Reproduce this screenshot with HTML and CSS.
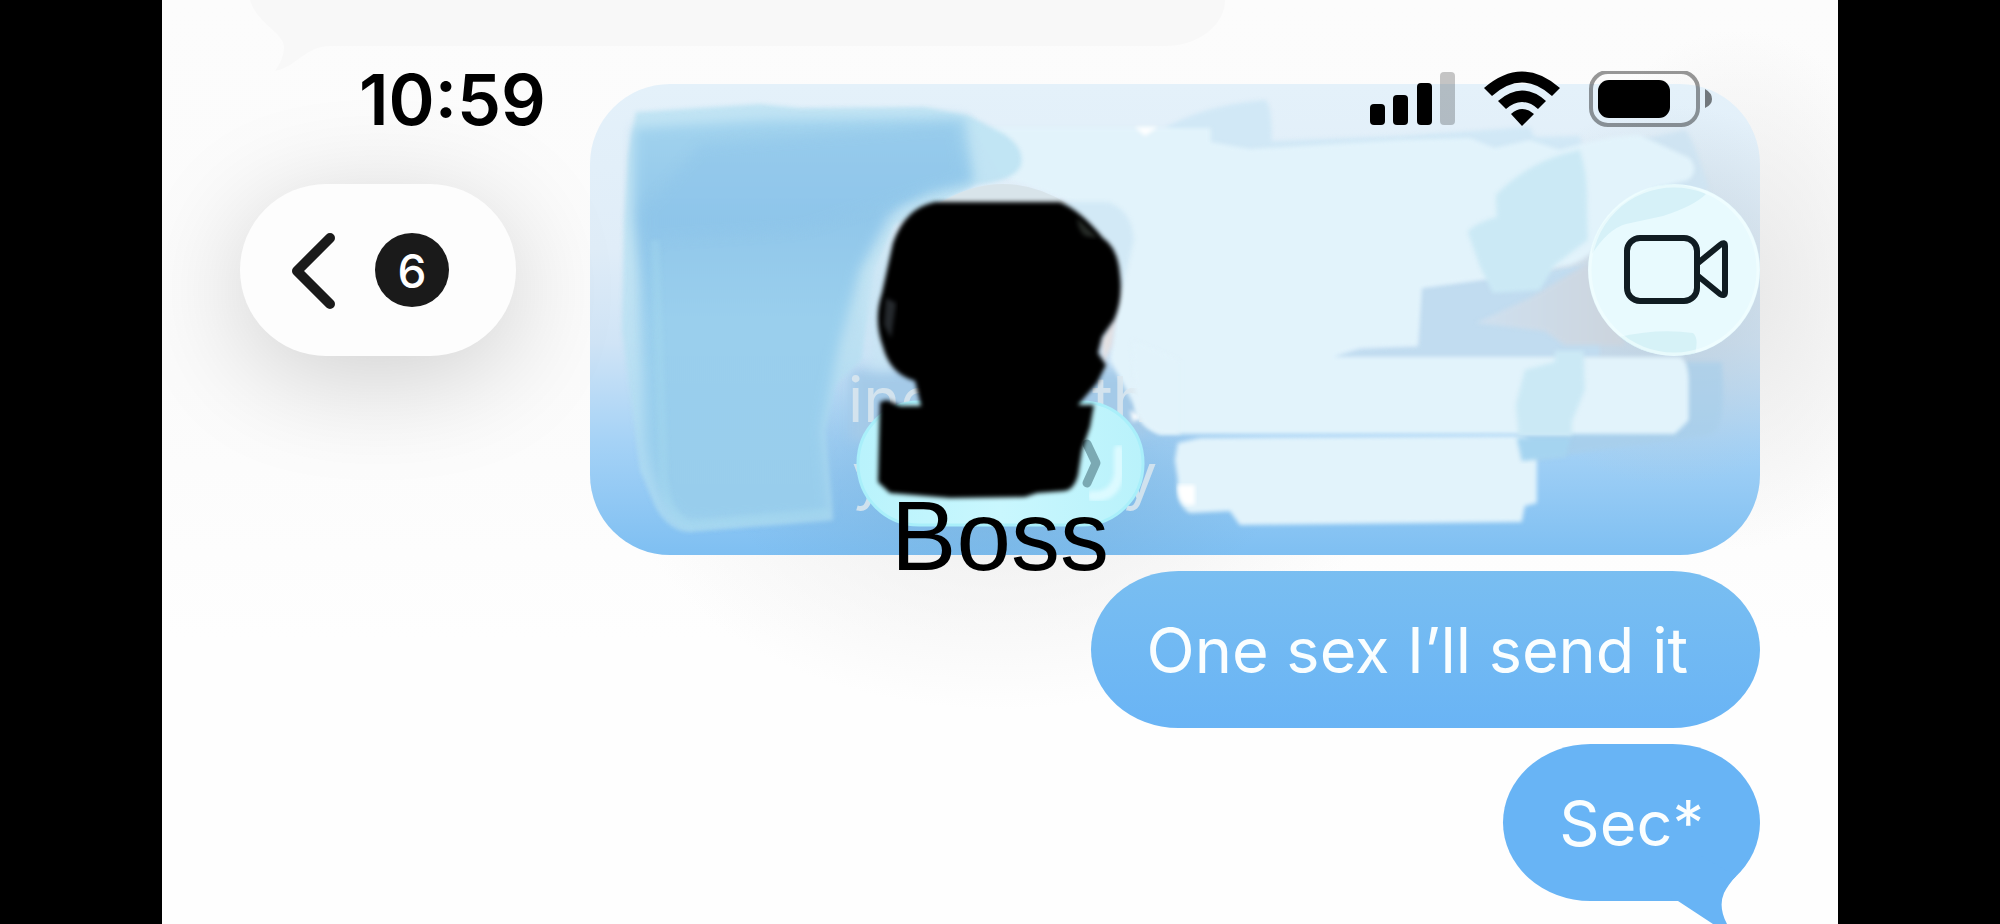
FILE: index.html
```html
<!DOCTYPE html>
<html lang="en">
<head>
<meta charset="utf-8">
<meta name="viewport" content="width=device-width, initial-scale=1">
<title>Messages</title>
<link rel="stylesheet" href="styles.css">
</head>
<body>
<div class="screen">
  <main class="thread">
    <div class="incoming">
      <svg class="incoming-tail" viewBox="0 0 80 80" aria-hidden="true"><path d="M0 0 C6 22 32 32 34 46 C34 56 30 64 25 71 C46 67 56 46 80 46 V0Z"/></svg>
    </div>
    <div class="bubble bubble-long">
      <svg class="paint" viewBox="590 84 1170 471" preserveAspectRatio="none" aria-hidden="true">
        <defs>
          <linearGradient id="leftPaint" x1="0" y1="0" x2="0" y2="1">
            <stop offset="0" stop-color="#a2d3ee"/><stop offset=".25" stop-color="#91c7ea"/><stop offset=".5" stop-color="#9acfed"/><stop offset="1" stop-color="#98cdec"/>
          </linearGradient>
          <linearGradient id="greyPatch" x1="0" y1="0" x2="1" y2="0"><stop offset="0" stop-color="#cfe0ef"/><stop offset="1" stop-color="#ccd4dd"/></linearGradient>
          <radialGradient id="rightShade"><stop offset="0" stop-color="#b9c8d3" stop-opacity=".75"/><stop offset="1" stop-color="#b9c8d3" stop-opacity="0"/></radialGradient>
          <radialGradient id="midShade"><stop offset="0" stop-color="#6fa9d4" stop-opacity=".6"/><stop offset="1" stop-color="#6fa9d4" stop-opacity="0"/></radialGradient>
          <filter id="soft" color-interpolation-filters="sRGB"><feGaussianBlur stdDeviation="2"/></filter>
          <filter id="wide" x="-20%" y="-20%" width="140%" height="140%" color-interpolation-filters="sRGB"><feGaussianBlur stdDeviation="6"/></filter>
        </defs>
        <ellipse cx="1670" cy="295" rx="190" ry="190" fill="url(#rightShade)"/>
        <ellipse cx="1000" cy="480" rx="280" ry="140" fill="url(#midShade)"/>
        <path d="M850 370H1150V434H1200L850 440Z" fill="#a4cae8" filter="url(#wide)"/>
        <path d="M1165 128Q1205 105 1265 100Q1272 102 1272 141L1400 136L1530 127L1535 137L1580 136L1585 155L1560 170L1250 165Z" fill="#d1e8f6" filter="url(#soft)"/>
        <path d="M1640 140L1685 130Q1692 134 1710 190L1650 195Z" fill="#cfe4f2" filter="url(#soft)"/>
        <path d="M1330 358Q1350 346 1418 346V286L1600 264V358Z" fill="#c1dcf0" filter="url(#soft)"/>
        <path d="M1476 323L1530 298L1590 262L1625 345L1565 345L1545 331Z" fill="url(#greyPatch)" filter="url(#soft)"/>
        <path d="M1685 362L1722 362Q1728 430 1710 435L1600 450L1530 461L1518 435L1685 430Z" fill="#a9cfea" opacity=".7" filter="url(#soft)"/>
        <path d="M965 115L985 128H1211V142L1250 149L1400 140L1470 138L1495 148L1530 140L1560 150Q1610 135 1640 135L1690 158Q1700 172 1688 180Q1670 185 1655 188L1612 220Q1600 255 1570 265L1480 280L1422 288L1418 346L1360 348L1333 357H1680Q1688 360 1689 380V420L1675 434H1160Q1137 425 1134 405L1110 360L1121 280L1119 260L1095 210L1000 175Z" fill="#e2f3fb" filter="url(#soft)"/>
        <path d="M1060 202H1108Q1132 210 1134 240L1122 290Z" fill="#d2e9f6" filter="url(#soft)"/>
        <path d="M1178 443L1200 438L1520 436Q1535 440 1537 460V503L1525 506L1522 522L1240 525L1230 511L1190 513Q1175 505 1178 480L1175 460Z" fill="#e2f3fb" filter="url(#soft)"/>
        <path d="M1580 150Q1588 175 1587 200L1588 240L1555 265L1540 290L1493 293L1480 266L1468 232Q1475 223 1497 217L1496 195Q1530 160 1580 150Z" fill="#cbe9f5" filter="url(#soft)"/>
        <path d="M1555 351H1584L1585 390L1572 422V436H1519L1516 405L1525 370L1555 362Z" fill="#cbe9f5" filter="url(#soft)"/>
        <path d="M1517 438H1571L1566 457L1522 461Z" fill="#a5d4f0" filter="url(#soft)"/>
        <path d="M1178 485H1195V505H1186Q1178 500 1178 485Z" fill="#fff" filter="url(#soft)"/>
        <path d="M636 112L760 104L800 108L925 107L970 116L1004 134Q1025 148 1021 165Q1015 181 975 185L895 225L875 270L862 360L835 385L825 430L833 520L690 532Q670 532 656 508L640 470L622 330L624 220L628 155Z" fill="#b4dff1" opacity=".72" filter="url(#soft)"/>
        <path d="M634 128L770 120L965 118L974 183L930 193L890 215L860 270L838 350L822 430L830 515L690 522Q655 510 645 440L640 280L634 220Z" fill="url(#leftPaint)" filter="url(#wide)"/>
        <path d="M700 145L955 125L965 178L800 230L655 240L645 370V210Z" fill="#8dc4ea" opacity=".45" filter="url(#wide)"/>
        <path d="M655 240L664 480Q668 518 690 525L828 512" stroke="#a7dbef" stroke-width="9" opacity=".35" fill="none" filter="url(#soft)"/>
        <path d="M940 198L905 215L870 270L865 300L870 370L895 372L900 210Z" fill="#c7e5f4" opacity=".75" filter="url(#wide)"/>
        <path d="M1135 127L1158 127L1145 136ZM1130 410L1142 417L1133 422Z" fill="#fff" filter="url(#soft)"/>
        <g class="ghost"><text x="848" y="422">ine</text><text x="1092" y="422">th</text><text x="852" y="498">y</text><text x="1122" y="498">y</text></g>
        <path d="M1132 340L1180 360V434H1160Q1137 425 1136 405Z" fill="#e2f3fb" filter="url(#soft)"/>
      </svg>
    </div>
    <div class="bubble">One sex I’ll send it</div>
    <div class="bubble bubble-last">Sec*
      <svg class="tail" viewBox="0 0 90 70" aria-hidden="true"><path d="M0 46H8L43 69L62 80L57 69Q48 52 54 38Q58 30 66 21L30 0Z"/></svg>
    </div>
  </main>
  <header class="chrome">
    <div class="status">
      <time class="clock">10:59</time>
      <svg class="indicators" viewBox="0 0 342 58" role="img" aria-label="Signal, Wi-Fi and battery">
        <rect x="0" y="33" width="15" height="21" rx="4"/><rect x="23" y="24" width="15" height="30" rx="4"/><rect x="47" y="12" width="15" height="42" rx="4"/><rect x="70" y="1" width="15" height="53" rx="4" opacity=".22"/>
        <path d="M114 17Q152-16 190 17L182 25Q152-2 122 25ZM128 30Q152 9 176 30L168 38Q152 24 136 38ZM141 43Q152 33 164 43L152 55Z"/>
        <rect x="221" y="1" width="107" height="53" rx="17" fill="none" stroke="#000" stroke-opacity=".4" stroke-width="4"/><rect x="228" y="9" width="72" height="38" rx="11"/><path d="M335 18Q342 22 342 28Q342 34 335 37Z" opacity=".5"/>
      </svg>
    </div>
    <nav class="nav">
      <button class="back" type="button" aria-label="Back, 6 unread">
        <svg class="chevron" viewBox="0 0 44 76" aria-hidden="true"><path d="M39 6L6 39L39 72"/></svg>
        <span class="count">6</span>
      </button>
      <button class="video" type="button" aria-label="Video call">
        <svg viewBox="0 0 172 172" aria-hidden="true">
          <path d="M4 65Q12 27 60 5Q90-6 118 10Q106 22 75 32L38 40Q20 45 4 70Z" fill="#d6f1f8"/><path d="M31 153Q70 144 105 149Q111 154 107 170Q60 176 31 153Z" fill="#d6f2f7"/>
          <circle cx="86" cy="86" r="84" fill="none" stroke="#f4ffff" stroke-width="3" opacity=".6"/>
          <g fill="none" stroke="#101c22" stroke-width="6" stroke-linejoin="round"><rect x="39" y="54" width="70" height="63" rx="13"/><path d="M110 79L132 61Q137 57 137 62V108Q137 113 132 110L110 92"/></g>
        </svg>
      </button>
    </nav>
    <button class="contact" type="button">
      <svg class="avatar" viewBox="850 180 300 350" aria-hidden="true">
        <defs>
          <linearGradient id="glass" x1="0" y1="0" x2="1" y2="0"><stop offset="0" stop-color="#b9f3fc"/><stop offset=".5" stop-color="#c9f7fe"/><stop offset="1" stop-color="#b9f2fb"/></linearGradient>
          <filter id="edge" color-interpolation-filters="sRGB"><feGaussianBlur stdDeviation="2"/></filter>
        </defs>
        <path d="M938 204Q1003 164 1068 204Z" fill="#d8e4ea"/>
        <rect x="858" y="402" width="285" height="123" rx="61" fill="url(#glass)" stroke="#a9effa" stroke-width="3"/>
        <path d="M910 506H1090" stroke="#e4feff" stroke-width="18" stroke-dasharray="7 16" opacity=".7" filter="url(#edge)"/>
        <path d="M1119 450V475Q1114 498 1092 496" fill="none" stroke="#dcfaff" stroke-width="10" stroke-linecap="round" filter="url(#edge)"/>
        <path d="M1087 444L1096 463L1087 483" fill="none" stroke="#7ba9b3" stroke-width="9" stroke-linecap="round" stroke-linejoin="round"/>
        <path d="M1116 315L1102 340L1103 365L1112 345Z" fill="#e3e0e2" filter="url(#edge)"/>
        <path d="M935 202H1060Q1080 210 1103 238Q1118 248 1120 275Q1123 300 1114 320L1102 337L1098 353L1106 365L1097 383L1078 405H1094L1090 427L1082 450L1078 475Q1074 490 1064 491L1037 493L1025 497L950 498L890 493L878 482L880 402L887 400L900 406H921L915 381Q890 374 883 347Q873 320 882 293L893 243Q905 208 935 202Z" filter="url(#edge)"/>
        <path d="M1077 218L1098 238L1085 236Q1078 230 1077 218Z" fill="#262b27" filter="url(#edge)"/><path d="M886 298L896 303L891 338L884 325Z" fill="#25292d" filter="url(#edge)"/>
      </svg>
      <span class="name">Boss</span>
    </button>
  </header>
</div>
</body>
</html>
```

FILE: styles.css
```css
* { box-sizing: border-box; }

body {
  margin: 0;
  background: #000;
  font-family: Inter, "Liberation Sans", sans-serif;
}

button {
  margin: 0;
  padding: 0;
  border: 0;
  background: none;
  color: inherit;
  font: inherit;
  cursor: pointer;
}

.screen {
  position: relative;
  width: 83.8%;
  height: 100vh;
  margin: 0 auto;
  overflow: hidden;
  background:
    radial-gradient(ellipse 380px 250px at 50% 460px, #ececec, transparent),
    radial-gradient(ellipse 180px 260px at 94% 290px, #e8e8e8, transparent),
    linear-gradient(#fcfcfc 0, #fbfbfb 380px, #fefefe 640px);
}

.thread {
  display: flex;
  flex-direction: column;
  align-items: flex-end;
  gap: 16px;
  padding-right: 78px;
}

.incoming {
  position: relative;
  align-self: flex-start;
  width: 61%;
  height: 46px;
  margin: 0 0 22px 88px;
  border-bottom-right-radius: 60px 46px;
}

.incoming::before {
  content: "";
  position: absolute;
  inset: 0 0 0 79px;
  border-bottom-right-radius: inherit;
  background: #f8f8f8;
}

.incoming-tail {
  position: absolute;
  top: 0;
  left: 0;
  width: 80px;
  height: 80px;
  fill: #f8f8f8;
}

.bubble {
  position: relative;
  padding: 35px 72px 34px 56px;
  border-radius: 88px / 79px;
  background: linear-gradient(#79bef1, #69b4f5);
  color: #fafeff;
  font-size: 63px;
  line-height: 88px;
  white-space: nowrap;
}

.bubble-long {
  width: 73.2%;
  height: 471px;
  padding: 0;
  overflow: hidden;
  border-radius: 80px;
  background: linear-gradient(#e4f1fa 0, #e0edf8 35%, #d0e4f6 55%, #a5d2f6 76%, #7ebff2 100%);
}

.paint {
  display: block;
  width: 100%;
  height: 100%;
}

.ghost {
  fill: #dce7ef;
  fill-opacity: .85;
  font-size: 63px;
}

.bubble-last {
  padding-right: 56px;
  background: #68b4f5;
}

.tail {
  position: absolute;
  right: 0;
  bottom: -24px;
  width: 90px;
  height: 70px;
  overflow: visible;
  fill: #68b4f5;
}

.chrome {
  position: absolute;
  inset: 0 0 auto;
  padding: 60px 78px 0;
}

.status {
  display: flex;
  justify-content: space-between;
  align-items: center;
  height: 80px;
  padding: 0 48px 0 119px;
}

.clock {
  font-size: 70px;
  font-weight: 600;
  line-height: 82px;
}

.indicators {
  width: 342px;
  height: 58px;
}

.nav {
  display: flex;
  justify-content: space-between;
  margin-top: 44px;
}

.back {
  display: flex;
  align-items: center;
  gap: 40px;
  height: 172px;
  padding: 0 67px 0 51px;
  border-radius: 86px;
  background: #fdfdfd;
  box-shadow: 0 20px 110px rgb(0 0 0 / 18%);
}

.chevron {
  width: 44px;
  height: 76px;
  overflow: visible;
  fill: none;
  stroke: #1a1a1a;
  stroke-width: 10;
  stroke-linecap: round;
  stroke-linejoin: round;
}

.count {
  width: 74px;
  height: 74px;
  border-radius: 50%;
  background: #1a1a1a;
  color: #fff;
  font-size: 46px;
  font-weight: 500;
  line-height: 76px;
  text-align: center;
}

.video {
  width: 172px;
  height: 172px;
  overflow: hidden;
  border-radius: 50%;
  background: #e8fafe;
}

.video svg {
  display: block;
}

.contact {
  position: absolute;
  top: 180px;
  left: 50%;
  display: flex;
  flex-direction: column;
  align-items: center;
  width: 300px;
  transform: translateX(-50%);
}

.avatar {
  width: 300px;
  height: 350px;
}

.name {
  margin-top: -52px;
  font-family: "Liberation Sans", Arial, sans-serif;
  font-size: 98px;
  line-height: 116px;
}
```
